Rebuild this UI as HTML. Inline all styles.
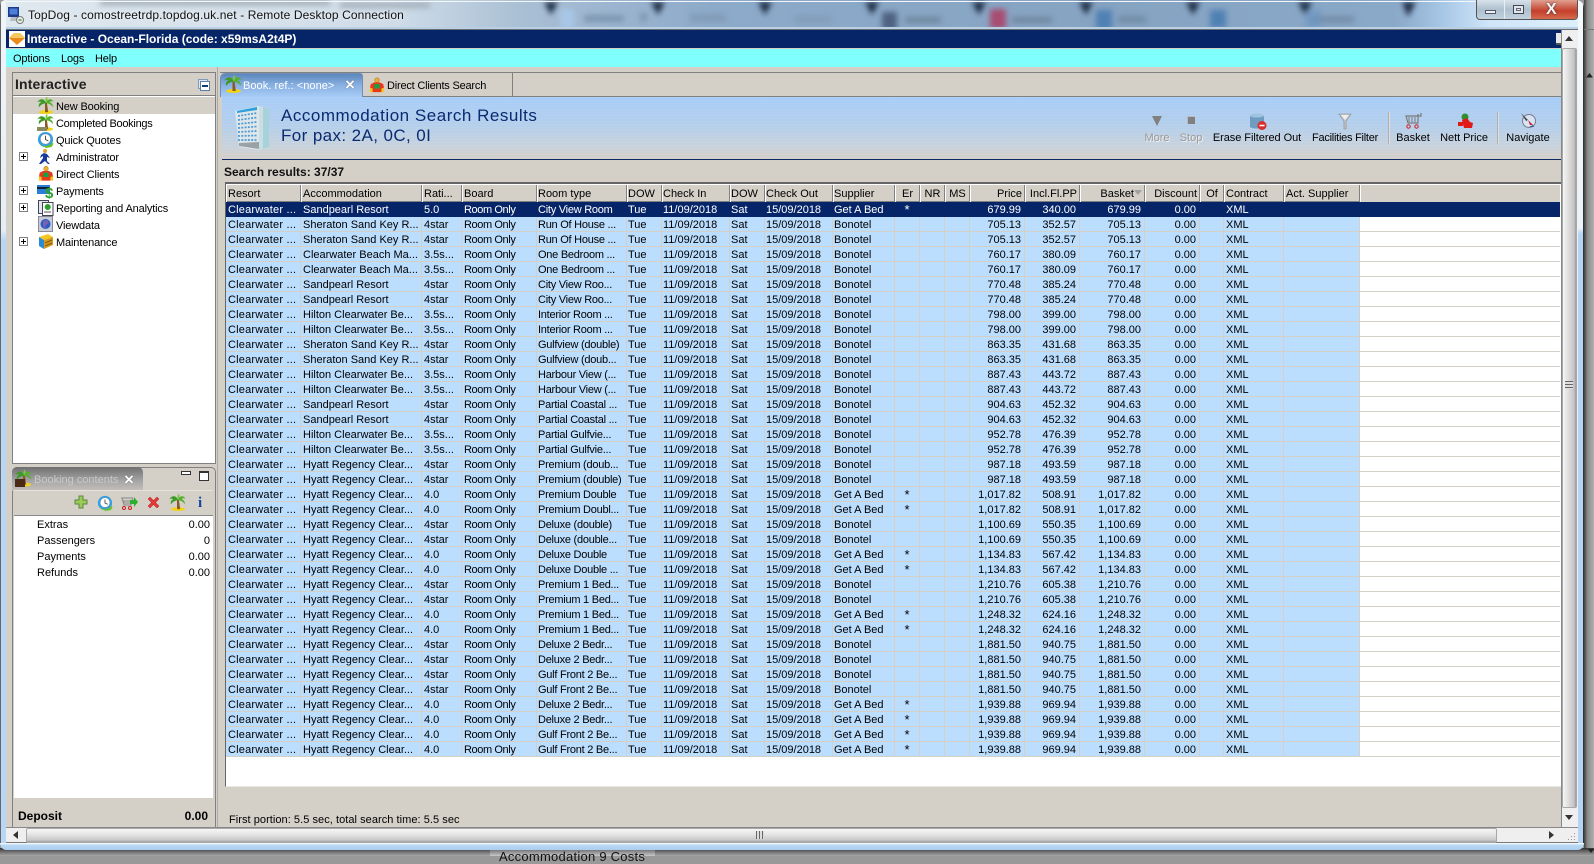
<!DOCTYPE html>
<html><head><meta charset="utf-8"><title>TopDog</title>
<style>
*{box-sizing:border-box}
html,body{margin:0;padding:0;width:1594px;height:856px;overflow:hidden;background:#999;font:11px "Liberation Sans",sans-serif;color:#000}
.a{position:absolute}
.t{position:absolute;white-space:nowrap;line-height:14px}
.n{letter-spacing:-.15px}
#win{position:absolute;left:0;top:0;width:1584px;height:850px;overflow:hidden;border-radius:6px 8px 7px 7px;background:#d4d0c8}
table{border-collapse:separate;border-spacing:0;table-layout:fixed;position:absolute;left:226px;top:184px;width:1334px}
th{height:18px;font-weight:normal;text-align:left;vertical-align:top;padding:3px 0 0 2px;background:#d4d0c8;box-shadow:inset 1px 1px 0 #fff,inset -1px -1px 0 #808080;overflow:hidden;white-space:nowrap;line-height:14px}
td{height:15px;padding:2px 0 0 2px;vertical-align:top;background:#bbdeff;border-right:1px solid #d4d0c8;border-bottom:1px solid #d4d0c8;overflow:hidden;white-space:nowrap;line-height:12px}
td:nth-child(21){background:#fff;border-right:0}
tr.s td{background:#062569;color:#fff;border-color:#062569}
td:nth-child(1){letter-spacing:.2px}
td:nth-child(4){letter-spacing:-.4px}
td:nth-child(5){letter-spacing:-.25px}
td:nth-child(5),td:nth-child(6),td:nth-child(7),td:nth-child(8),td:nth-child(9),td:nth-child(10),th:nth-child(5),th:nth-child(6),th:nth-child(7),th:nth-child(8),th:nth-child(9),th:nth-child(10){padding-left:1px}
td:nth-child(14),td:nth-child(15),td:nth-child(16),td:nth-child(17){text-align:right;padding:2px 3px 0 0}
th:nth-child(14),th:nth-child(15),th:nth-child(16),th:nth-child(17){text-align:right;padding:3px 3px 0 0}
td:nth-child(11){text-align:center;padding:2px 0 0;font-size:13px}
th:nth-child(11),th:nth-child(12),th:nth-child(13),th:nth-child(18){text-align:center;padding:3px 0 0}
svg{position:absolute;display:block}
.bt{position:absolute;top:131px;transform:translateX(-50%);white-space:nowrap;line-height:14px}
.dis{color:#9a9a9a;text-shadow:1px 1px 0 #eee}
</style></head><body>
<svg width="0" height="0" style="position:absolute"><defs>
<symbol id="palm" viewBox="0 0 18 18"><ellipse cx="9.500" cy="16" rx="7.500" ry="2" fill="#f2d21a"/><path d="M8.500 6l2 .2 1.300 9.800H8.500z" fill="#8a5a20"/><path d="M9.500 6.500C8 1.500 3 1 .5 5.500c2-.8 3-.8 4 0C2.500 6 1.500 8 2 11c2-3 4.500-4 7.500-4.500z" fill="#3c9a28"/><path d="M9.500 6.500C11 1.500 15.500 1 17.500 5c-2-.8-3.200-.5-4 .5 2 .5 3.500 2.500 3.500 5.500-2-3-4.500-4-7.500-4.500z" fill="#55b030"/><path d="M9.500 6.500C8.500 3 9 1 10.500 0c1 1.500 1 4-1 6.500z" fill="#7cc63c"/></symbol>
<symbol id="guy" viewBox="0 0 18 18"><circle cx="9" cy="3.500" r="2.500" fill="#f2b030" stroke="#a06a10" stroke-width=".6"/><path d="M2 8l4-2h6l4 2 1 5-3 1v3H4v-3l-3-1z" fill="#e8381a"/><path d="M6 8h6v5H6z" fill="#18a048"/><path d="M1 12l3 1v4H1zM17 12l-3 1v4h3z" fill="#f2c820"/></symbol>
<symbol id="clock" viewBox="0 0 18 18"><circle cx="9" cy="9" r="8" fill="#2fa0ea"/><path d="M3 13a8 8 0 0 0 13-1l1.500 1.500-2 3.500-6 1-5-3z" fill="#6cc02c"/><circle cx="9" cy="8.500" r="5.500" fill="#fff" stroke="#7a8a9a" stroke-width=".6"/><path d="M9 5v4l3 1.500" fill="none" stroke="#444" stroke-width="1"/></symbol>
</defs></svg>

<!-- desktop behind -->
<div class="a" style="left:1584px;top:0;width:10px;height:856px;background:linear-gradient(90deg,#3f3f3f,#8a8a8a 35%,#b0b0b0)"></div>
<div class="a" style="left:1584px;top:29px;width:10px;height:1px;background:#777"></div>
<svg style="left:1586px;top:72px" width="8" height="6"><path d="M0 5.500L3.500 1 7 5.500z" fill="#222"/></svg>
<div class="a" style="left:0;top:848px;width:1594px;height:8px;background:linear-gradient(#2f2f2f,#6d6d6d 45%,#a6a6a6)"></div>
<div class="a" style="left:490px;top:850px;width:165px;height:6px;background:linear-gradient(#777,#c8c8c8)"></div>
<div class="t" style="left:499px;top:850px;font-size:13px;letter-spacing:.25px;color:#111">Accommodation 9 Costs</div>
<svg style="left:1588px;top:849px" width="6" height="5"><path d="M0 0h6L3 4z" fill="#222"/></svg>

<div id="win">
<!-- glass -->
<div class="a" style="left:0;top:0;width:1584px;height:30px;background:linear-gradient(90deg,#dfe8ef 0,#cfdce8 25%,#a9bfd4 33%,#8daaca 45%,#86a3c2 70%,#8aa8c8 88%,#a6c6e6 91%,#cfe5f8 94%,#dff0fc 100%);overflow:hidden">
 <div class="a" style="left:0;top:0;width:1584px;height:30px;filter:blur(3px)">
  <div class="a" style="left:100px;top:0;width:230px;height:5px;background:#9aa6b0"></div>
  <div class="a" style="left:340px;top:2px;width:90px;height:6px;background:#a4b0bc"></div>
  <svg style="left:544px;top:2px" width="760" height="14" viewBox="0 0 760 14"><path d="M0 0h14L7 13zM107 0h14l-7 13zM214 0h14l-7 13zM321 0h14l-7 13zM428 0h14l-7 13zM535 0h14l-7 13zM642 0h14l-7 13z" fill="#1a2a40"/></svg>
  <svg style="left:1298px;top:2px" width="130" height="16" viewBox="0 0 130 16"><path d="M0 0h14L7 13zM104 0h14l-8 15z" fill="#1a2a40"/></svg>
  <div class="a" style="left:560px;top:9px;width:14px;height:20px;background:#a8c6e6"></div>
  <div class="a" style="left:584px;top:15px;width:40px;height:7px;background:#7d96b0"></div>
  <div class="a" style="left:640px;top:13px;width:7px;height:8px;background:#7d96b0"></div>
  <div class="a" style="left:690px;top:14px;width:36px;height:8px;background:#829cb8"></div>
  <div class="a" style="left:795px;top:16px;width:36px;height:7px;background:#829cb8"></div>
  <div class="a" style="left:882px;top:12px;width:15px;height:18px;background:#4e6180"></div>
  <div class="a" style="left:905px;top:17px;width:36px;height:6px;background:#6e869e"></div>
  <div class="a" style="left:990px;top:9px;width:16px;height:20px;background:#a84c70"></div>
  <div class="a" style="left:1012px;top:17px;width:40px;height:6px;background:#70869e"></div>
  <div class="a" style="left:1096px;top:10px;width:16px;height:20px;background:#4f80b4"></div>
  <div class="a" style="left:1118px;top:16px;width:28px;height:7px;background:#728ca6"></div>
  <div class="a" style="left:1310px;top:16px;width:44px;height:7px;background:#748ea8"></div>
  <div class="a" style="left:1305px;top:9px;width:16px;height:20px;background:#6b96c4;opacity:.6"></div>
  <div class="a" style="left:1210px;top:10px;width:16px;height:18px;background:#4f80b4"></div>
 </div>
</div>
<div class="a" style="left:0;top:1px;width:1584px;height:1px;background:#f4f6f8"></div>
<div class="a" style="left:0;top:27px;width:1584px;height:2px;background:#b9cfe4"></div>
<div class="a" style="left:5px;top:29px;width:1573px;height:1px;background:#6a6f74"></div>
<!-- side glass -->
<div class="a" style="left:0;top:0;width:6px;height:850px;background:linear-gradient(#f0f5f9 0,#e6eef5 230px,#b9d6f4 240px,#b9d6f4 100%);border-left:1px solid #666"></div>
<div class="a" style="left:1578px;top:0;width:6px;height:850px;background:linear-gradient(#f4f8fb 0,#eaf3fa 228px,#b5d3f3 234px,#b5d3f3 100%);border-right:1px solid #333"></div>
<div class="a" style="left:0;top:843px;width:1584px;height:7px;background:linear-gradient(#fff 0,#bcd8f4 30%,#a9cdf1 100%)"></div>
<!-- RD title -->
<svg style="left:8px;top:7px" width="16" height="17" viewBox="0 0 16 17"><rect x="0" y="0" width="11" height="10" fill="#1c3a8a"/><rect x="1.500" y="1.500" width="8" height="6" fill="#4a7fd8"/><path d="M3 10h7l1 4H2z" fill="#b8bcc4"/><circle cx="12" cy="13" r="3.500" fill="#eee" stroke="#777"/><path d="M10.500 13h3" stroke="#2a8a2a" stroke-width="1.300"/></svg>
<div class="t" style="left:28px;top:8px;font-size:12px;letter-spacing:.11px;color:#111;text-shadow:0 0 4px #fff">TopDog - comostreetrdp.topdog.uk.net - Remote Desktop Connection</div>
<!-- window buttons -->
<div class="a" style="left:1476px;top:0;width:102px;height:20px;border:1px solid #555;border-top:0;border-radius:0 0 4px 4px;background:linear-gradient(#d8e2ea,#aebfce 50%,#c4d2de);overflow:hidden">
 <div class="a" style="left:27px;top:0;width:1px;height:20px;background:#e8eef4"></div>
 <div class="a" style="left:54px;top:0;width:47px;height:20px;background:linear-gradient(#e0a090,#c4402c 55%,#d87050)"></div>
 <div class="a" style="left:8px;top:10px;width:11px;height:4px;background:#eef2f6;border:1px solid #556"></div>
 <div class="a" style="left:36px;top:5px;width:11px;height:9px;border:1px solid #445;background:#dfe6ec;box-shadow:inset 0 0 0 2px #dfe6ec,inset 0 0 0 3px #667"></div>
 <div class="t" style="left:69px;top:2px;font:bold 16px/15px 'Liberation Sans',sans-serif;color:#f4f4f4;text-shadow:0 0 2px #333">X</div>
</div>
<!-- navy title -->
<div class="a" style="left:6px;top:30px;width:1555px;height:18px;background:#062569"></div>
<div class="a" style="left:9px;top:31px;width:16px;height:16px;background:#fff"></div>
<svg style="left:9px;top:32px" width="16" height="14" viewBox="0 0 16 14"><path d="M0 6l5-5h6l5 5-8 7z" fill="#e88a1c"/><path d="M0 6l5-5h6l5 5z" fill="#f6c860"/></svg>
<div class="t" style="left:27px;top:32px;font-weight:bold;font-size:12px;color:#fff">Interactive - Ocean-Florida (code: x59msA2t4P)</div>
<div class="a" style="left:1556px;top:33px;width:5px;height:12px;background:#e8e8e8;border-bottom:2px solid #555"></div>
<!-- menu -->
<div class="a" style="left:6px;top:49px;width:1555px;height:18px;background:#80ffff"></div>
<div class="t n" style="left:13px;top:52px">Options</div>
<div class="t n" style="left:61px;top:52px">Logs</div>
<div class="t n" style="left:95px;top:52px">Help</div>
<!-- left panel -->
<div class="a" style="left:12px;top:72px;width:204px;height:392px;background:#fff;border:1px solid #808080"></div>
<div class="a" style="left:13px;top:73px;width:202px;height:23px;background:#d4d0c8;border-bottom:1px solid #808080"></div>
<div class="t" style="left:15px;top:76px;font-weight:bold;font-size:14px;line-height:16px;color:#222;letter-spacing:.15px">Interactive</div>
<div class="a" style="left:198px;top:79px;width:10px;height:10px;border:1px solid #7f9db9;background:#dde8f4"></div>
<div class="a" style="left:200px;top:81px;width:10px;height:10px;border:1px solid #5a7fa8;background:#fff"></div>
<div class="a" style="left:202px;top:85px;width:6px;height:2px;background:#123a78"></div>
<div class="a" style="left:13px;top:97px;width:202px;height:17px;background:#d4d0c8"></div>
<svg style="left:37px;top:97px" width="17" height="17"><use href="#palm"/></svg>
<svg style="left:37px;top:114px" width="17" height="17"><use href="#palm"/></svg>
<div class="a" style="left:37px;top:127px;width:10px;height:4px;background:#8a8a60"></div>
<svg style="left:37px;top:131px" width="17" height="17"><use href="#clock"/></svg>
<svg style="left:38px;top:148px" width="16" height="17" viewBox="0 0 16 17"><circle cx="7" cy="3" r="2" fill="#e0a030"/><path d="M6 5l3 1 3 4-3-1v4l3 3h-2l-3-3-4 3H1l4-6V8L2 10l1-3z" fill="#1a3a9a"/></svg>
<svg style="left:38px;top:165px" width="16" height="17"><use href="#guy"/></svg>
<svg style="left:37px;top:182px" width="17" height="17" viewBox="0 0 17 17"><rect x="0" y="3" width="13" height="9" fill="#2a7fd8"/><rect x="0" y="5" width="13" height="2" fill="#123"/><text x="8" y="16" font-family="Liberation Sans" font-weight="bold" font-size="15" fill="#2aa02a">$</text></svg>
<svg style="left:38px;top:199px" width="16" height="17" viewBox="0 0 16 17"><rect x=".5" y="1.500" width="10" height="13" fill="#dfe6ee" stroke="#445"/><rect x="4.500" y="3.500" width="10.500" height="13" fill="#fff" stroke="#445"/><circle cx="9.700" cy="8" r="3" fill="#28a028"/><path d="M6 13h7" stroke="#555"/></svg>
<svg style="left:38px;top:216px" width="15" height="17" viewBox="0 0 15 17"><rect x=".5" y=".5" width="14" height="15" fill="#c8ccd4" stroke="#889"/><circle cx="7.500" cy="8" r="5" fill="#2a5ac8"/><path d="M5 5l4-1 2 3-3 2-1 4-2-3z" fill="#7a60b0"/></svg>
<svg style="left:38px;top:233px" width="16" height="17" viewBox="0 0 16 17"><path d="M1 4l9-3 5 3-9 3z" fill="#f2c820"/><path d="M1 4l5 3v9L1 13z" fill="#2a8ad8"/><path d="M6 7l9-3v8l-9 4z" fill="#d89a18"/><path d="M7 10l7-3M7 13l7-3" stroke="#7a5a10"/></svg>
<div class="t n" style="left:56px;top:100px">New Booking</div>
<div class="t n" style="left:56px;top:117px;letter-spacing:-.28px">Completed Bookings</div>
<div class="t n" style="left:56px;top:134px">Quick Quotes</div>
<div class="t n" style="left:56px;top:151px">Administrator</div>
<div class="t n" style="left:56px;top:168px">Direct Clients</div>
<div class="t n" style="left:56px;top:185px">Payments</div>
<div class="t n" style="left:56px;top:202px">Reporting and Analytics</div>
<div class="t n" style="left:56px;top:219px">Viewdata</div>
<div class="t n" style="left:56px;top:236px">Maintenance</div>
<svg style="left:19px;top:0" width="9" height="250"><g fill="#fff" stroke="#808080"><rect x=".5" y="152.500" width="8" height="8"/><rect x=".5" y="186.500" width="8" height="8"/><rect x=".5" y="203.500" width="8" height="8"/><rect x=".5" y="237.500" width="8" height="8"/></g><path d="M2 156.500h5M4.500 154v5M2 190.500h5M4.500 188v5M2 207.500h5M4.500 205v5M2 241.500h5M4.500 239v5" stroke="#000"/></svg>
<!-- booking contents -->
<div class="a" style="left:12px;top:467px;width:204px;height:361px;border:1px solid #808080;border-bottom:0;border-radius:5px 5px 0 0;background:#d4d0c8"></div>
<div class="a" style="left:12px;top:467px;width:131px;height:24px;border-radius:5px 5px 0 0;background:linear-gradient(#6f6f6f,#a8a8a8 60%,#c4c0ba)"></div>
<svg style="left:15px;top:469px" width="17" height="18"><use href="#palm"/></svg>
<div class="a" style="left:15px;top:479px;width:10px;height:8px;background:#4a2a14"></div>
<div class="t" style="left:34px;top:473px;color:#c8c8c8">Booking contents</div>
<div class="t" style="left:124px;top:472px;font:bold 17px/15px 'Liberation Sans',sans-serif;color:#fff;text-shadow:0 0 1px #333">×</div>
<div class="a" style="left:181px;top:471px;width:10px;height:4px;border:1px solid #333;background:#fff"></div>
<div class="a" style="left:199px;top:471px;width:10px;height:10px;border:1px solid #333;border-top-width:2px;background:#fff"></div>
<div class="a" style="left:14px;top:491px;width:199px;height:24px;background:#d4d0c8;box-shadow:0 -1px 0 #e6e3dd"></div>
<div class="a" style="left:14px;top:515px;width:199px;height:283px;background:#fff;border-top:1px solid #888"></div>
<svg style="left:74px;top:495px" width="14" height="14" viewBox="0 0 14 14"><path d="M5 1h4v4h4v4H9v4H5V9H1V5h4z" fill="#9ccb5a" stroke="#5a8a3a"/></svg>
<svg style="left:97px;top:495px" width="16" height="16"><use href="#clock"/></svg>
<svg style="left:121px;top:495px" width="17" height="16" viewBox="0 0 17 16"><path d="M0 3h12M1 3l2 7h7l2-7M3 5v4M5 5v4M7 5v4M9 5v4" stroke="#888" fill="none"/><circle cx="3" cy="13" r="1.500" fill="none" stroke="#c22"/><circle cx="9" cy="13" r="1.500" fill="none" stroke="#c22"/><path d="M9 5h4V2l4 5-4 5V9H9z" fill="#2cb02c"/></svg>
<svg style="left:147px;top:496px" width="13" height="13" viewBox="0 0 13 13"><path d="M1 3l2-2 3.500 3.500L10 1l2 2-3.500 3.500L12 10l-2 2-3.500-3.500L3 12l-2-2 3.500-3.500z" fill="#e23a3a" stroke="#b02020" stroke-width=".5"/></svg>
<svg style="left:169px;top:494px" width="17" height="17"><use href="#palm"/></svg>
<div class="t" style="left:198px;top:495px;font:bold 15px/16px 'Liberation Serif',serif;color:#16489a">i</div>
<div class="t" style="left:37px;top:518px">Extras</div><div class="t" style="left:150px;width:60px;text-align:right;top:518px">0.00</div>
<div class="t" style="left:37px;top:534px">Passengers</div><div class="t" style="left:150px;width:60px;text-align:right;top:534px">0</div>
<div class="t" style="left:37px;top:550px">Payments</div><div class="t" style="left:150px;width:60px;text-align:right;top:550px">0.00</div>
<div class="t" style="left:37px;top:566px">Refunds</div><div class="t" style="left:150px;width:60px;text-align:right;top:566px">0.00</div>
<div class="t" style="left:18px;top:809px;font-weight:bold;font-size:12px">Deposit</div><div class="t" style="left:150px;width:58px;text-align:right;top:809px;font-weight:bold;font-size:12px">0.00</div>
<div class="t" style="left:18px;top:825px;font-weight:bold;font-size:12px">Profit</div><div class="t" style="left:150px;width:58px;text-align:right;top:825px;font-weight:bold;font-size:12px">0.00</div>
<!-- right tabs -->
<div class="a" style="left:217px;top:67px;width:1px;height:761px;background:#aaa"></div>
<div class="a" style="left:220px;top:72px;width:1341px;height:25px;border-top:1px solid #808080;border-bottom:1px solid #808080;background:#d4d0c8"></div>
<div class="a" style="left:220px;top:73px;width:143px;height:24px;border-radius:5px 3px 0 0;background:linear-gradient(#5c86bc,#86aee0 45%,#a8ccf6);border:1px solid #6f8fb6;border-bottom:0"></div>
<svg style="left:224px;top:75px" width="18" height="18"><use href="#palm"/></svg>
<div class="t" style="left:243px;top:79px;color:#fff;letter-spacing:.05px">Book. ref.: &lt;none&gt;</div>
<div class="t" style="left:345px;top:76px;font:bold 17px/17px 'Liberation Sans',sans-serif;color:#fff;text-shadow:0 0 1px #333">×</div>
<div class="a" style="left:363px;top:73px;width:150px;height:23px;background:#d4d0c8;border-right:1px solid #808080"></div>
<svg style="left:369px;top:76px" width="16" height="18"><use href="#guy"/></svg>
<div class="t" style="left:387px;top:79px;letter-spacing:-.2px">Direct Clients Search</div>
<!-- blue banner -->
<div class="a" style="left:222px;top:97px;width:1339px;height:62px;background:repeating-linear-gradient(rgba(255,255,255,.05) 0 1px,rgba(0,0,0,0) 1px 3px),linear-gradient(#a8cdf8,#b4cfec 45%,#c8d2dc 80%,#d4d0c8)"></div>
<div class="a" style="left:222px;top:159px;width:1339px;height:1px;background:#0a2a6a"></div>
<svg style="left:234px;top:102px" width="37" height="48" viewBox="0 0 37 48"><path d="M1 9l24-5 10 3v38l-10 3-20-3z" fill="#dfe6ea"/><path d="M25 4l10 3v38l-10 3z" fill="#a8d2da"/><path d="M25 4l4 1v42l-4 1z" fill="#c8dee2"/><path d="M3 9l20-4v3L3 11z" fill="#2aa0dc"/><g stroke="#4a9ad8" stroke-width="1.700" stroke-dasharray="2 1.300" fill="none"><path d="M4 14l19-3M4 18l19-2.500M4 22l19-2M4 26l19-1.500M4 30l19-1M4 34l19-.5M4 38l19 0"/></g><path d="M5 41l20-1v7l-20-3z" fill="#9aa2a6"/></svg>
<div class="t" style="left:281px;top:107px;font-size:17px;line-height:18px;color:#0a2a70;letter-spacing:.52px">Accommodation Search Results</div>
<div class="t" style="left:281px;top:127px;font-size:17px;line-height:18px;color:#0a2a70;letter-spacing:.4px">For pax: 2A, 0C, 0I</div>
<!-- toolbar -->
<svg style="left:1151px;top:115px" width="12" height="12" viewBox="0 0 12 12"><path d="M1 1h10L6 11z" fill="#808080"/></svg>
<div class="a" style="left:1187px;top:116px;width:8px;height:8px;background:#808080;box-shadow:inset 1px 1px 0 #bbb"></div>
<svg style="left:1250px;top:113px" width="17" height="17" viewBox="0 0 17 17"><ellipse cx="7" cy="3" rx="7" ry="2.500" fill="#9ec4e0"/><path d="M0 3v11c2 2 11 2 14 0V3c-3 2-12 2-14 0z" fill="#6f9cc0"/><circle cx="12" cy="12.500" r="4.500" fill="#d83030"/><path d="M9.500 12.500h5" stroke="#fff" stroke-width="1.500"/></svg>
<svg style="left:1338px;top:113px" width="14" height="17" viewBox="0 0 14 17"><path d="M1 1h12L8 8v8H6V8z" fill="#c6c6c6" stroke="#888" stroke-width=".6"/><path d="M3 2h8L7 7z" fill="#eee"/></svg>
<div class="a" style="left:1388px;top:112px;width:2px;height:32px;background:linear-gradient(90deg,#999,#f4f4f4)"></div>
<svg style="left:1405px;top:113px" width="17" height="16" viewBox="0 0 17 16"><path d="M16 0v3H1l2 7h10V1" fill="none" stroke="#7a7a7a" stroke-width="1.200"/><path d="M4 4v5M7 4v5M10 4v5" stroke="#7a7a7a"/><circle cx="3.500" cy="13.500" r="1.700" fill="none" stroke="#d02020"/><circle cx="11.500" cy="13.500" r="1.700" fill="none" stroke="#d02020"/></svg>
<svg style="left:1457px;top:113px" width="16" height="16" viewBox="0 0 16 16"><circle cx="8" cy="4" r="3.500" fill="#2f8f2f"/><path d="M1 9h5v4H1zM5 7l5-2 3 4 3 1-1 5H7z" fill="#e01818"/></svg>
<div class="a" style="left:1497px;top:112px;width:2px;height:32px;background:linear-gradient(90deg,#999,#f4f4f4)"></div>
<svg style="left:1520px;top:112px" width="17" height="18" viewBox="0 0 17 18"><circle cx="9" cy="9" r="6.500" fill="#d8e4f4" stroke="#7a7a8a"/><path d="M13 13L8 8l2 5z" fill="#c82020"/><path d="M1 1l7 7-2 1z" fill="#444"/><path d="M9 15l4-2 1 2z" fill="#385a9a"/></svg>
<div class="bt dis" style="left:1157px">More</div>
<div class="bt dis" style="left:1191px">Stop</div>
<div class="bt" style="left:1257px;letter-spacing:-.05px">Erase Filtered Out</div>
<div class="bt" style="left:1345px;letter-spacing:-.25px">Facilities Filter</div>
<div class="bt" style="left:1413px">Basket</div>
<div class="bt" style="left:1464px;letter-spacing:-.05px">Nett Price</div>
<div class="bt" style="left:1528px">Navigate</div>
<!-- results -->
<div class="t" style="left:224px;top:165px;font-weight:bold;font-size:12px;color:#111">Search results: 37/37</div>
<div class="a" style="left:225px;top:182px;width:1336px;height:605px;background:#fff;border-top:2px solid #666;border-left:1px solid #666;border-bottom:1px solid #e8e8e8"></div>
<table>
<colgroup><col style="width:75px"><col style="width:121px"><col style="width:40px"><col style="width:75px"><col style="width:90px"><col style="width:35px"><col style="width:68px"><col style="width:35px"><col style="width:68px"><col style="width:62px"><col style="width:25px"><col style="width:25px"><col style="width:25px"><col style="width:55px"><col style="width:55px"><col style="width:65px"><col style="width:55px"><col style="width:24px"><col style="width:60px"><col style="width:76px"><col style="width:200px"></colgroup>
<thead><tr><th>Resort</th><th>Accommodation</th><th>Rati...</th><th>Board</th><th>Room type</th><th>DOW</th><th>Check In</th><th>DOW</th><th>Check Out</th><th>Supplier</th><th>Er</th><th>NR</th><th>MS</th><th>Price</th><th>Incl.Fl.PP</th><th style="padding-right:11px">Basket</th><th>Discount</th><th>Of</th><th>Contract</th><th>Act. Supplier</th><th style="box-shadow:inset 1px 1px 0 #fff"></th></tr></thead>
<tbody>
<tr class="s"><td>Clearwater ...</td><td>Sandpearl Resort</td><td>5.0</td><td>Room Only</td><td>City View Room</td><td>Tue</td><td>11/09/2018</td><td>Sat</td><td>15/09/2018</td><td>Get A Bed</td><td>*</td><td></td><td></td><td>679.99</td><td>340.00</td><td>679.99</td><td>0.00</td><td></td><td>XML</td><td></td><td style="background:#062569"></td></tr>
<tr><td>Clearwater ...</td><td>Sheraton Sand Key R...</td><td>4star</td><td>Room Only</td><td>Run Of House ...</td><td>Tue</td><td>11/09/2018</td><td>Sat</td><td>15/09/2018</td><td>Bonotel</td><td></td><td></td><td></td><td>705.13</td><td>352.57</td><td>705.13</td><td>0.00</td><td></td><td>XML</td><td></td><td></td></tr>
<tr><td>Clearwater ...</td><td>Sheraton Sand Key R...</td><td>4star</td><td>Room Only</td><td>Run Of House ...</td><td>Tue</td><td>11/09/2018</td><td>Sat</td><td>15/09/2018</td><td>Bonotel</td><td></td><td></td><td></td><td>705.13</td><td>352.57</td><td>705.13</td><td>0.00</td><td></td><td>XML</td><td></td><td></td></tr>
<tr><td>Clearwater ...</td><td>Clearwater Beach Ma...</td><td>3.5s...</td><td>Room Only</td><td>One Bedroom ...</td><td>Tue</td><td>11/09/2018</td><td>Sat</td><td>15/09/2018</td><td>Bonotel</td><td></td><td></td><td></td><td>760.17</td><td>380.09</td><td>760.17</td><td>0.00</td><td></td><td>XML</td><td></td><td></td></tr>
<tr><td>Clearwater ...</td><td>Clearwater Beach Ma...</td><td>3.5s...</td><td>Room Only</td><td>One Bedroom ...</td><td>Tue</td><td>11/09/2018</td><td>Sat</td><td>15/09/2018</td><td>Bonotel</td><td></td><td></td><td></td><td>760.17</td><td>380.09</td><td>760.17</td><td>0.00</td><td></td><td>XML</td><td></td><td></td></tr>
<tr><td>Clearwater ...</td><td>Sandpearl Resort</td><td>4star</td><td>Room Only</td><td>City View Roo...</td><td>Tue</td><td>11/09/2018</td><td>Sat</td><td>15/09/2018</td><td>Bonotel</td><td></td><td></td><td></td><td>770.48</td><td>385.24</td><td>770.48</td><td>0.00</td><td></td><td>XML</td><td></td><td></td></tr>
<tr><td>Clearwater ...</td><td>Sandpearl Resort</td><td>4star</td><td>Room Only</td><td>City View Roo...</td><td>Tue</td><td>11/09/2018</td><td>Sat</td><td>15/09/2018</td><td>Bonotel</td><td></td><td></td><td></td><td>770.48</td><td>385.24</td><td>770.48</td><td>0.00</td><td></td><td>XML</td><td></td><td></td></tr>
<tr><td>Clearwater ...</td><td>Hilton Clearwater Be...</td><td>3.5s...</td><td>Room Only</td><td>Interior Room ...</td><td>Tue</td><td>11/09/2018</td><td>Sat</td><td>15/09/2018</td><td>Bonotel</td><td></td><td></td><td></td><td>798.00</td><td>399.00</td><td>798.00</td><td>0.00</td><td></td><td>XML</td><td></td><td></td></tr>
<tr><td>Clearwater ...</td><td>Hilton Clearwater Be...</td><td>3.5s...</td><td>Room Only</td><td>Interior Room ...</td><td>Tue</td><td>11/09/2018</td><td>Sat</td><td>15/09/2018</td><td>Bonotel</td><td></td><td></td><td></td><td>798.00</td><td>399.00</td><td>798.00</td><td>0.00</td><td></td><td>XML</td><td></td><td></td></tr>
<tr><td>Clearwater ...</td><td>Sheraton Sand Key R...</td><td>4star</td><td>Room Only</td><td>Gulfview (double)</td><td>Tue</td><td>11/09/2018</td><td>Sat</td><td>15/09/2018</td><td>Bonotel</td><td></td><td></td><td></td><td>863.35</td><td>431.68</td><td>863.35</td><td>0.00</td><td></td><td>XML</td><td></td><td></td></tr>
<tr><td>Clearwater ...</td><td>Sheraton Sand Key R...</td><td>4star</td><td>Room Only</td><td>Gulfview (doub...</td><td>Tue</td><td>11/09/2018</td><td>Sat</td><td>15/09/2018</td><td>Bonotel</td><td></td><td></td><td></td><td>863.35</td><td>431.68</td><td>863.35</td><td>0.00</td><td></td><td>XML</td><td></td><td></td></tr>
<tr><td>Clearwater ...</td><td>Hilton Clearwater Be...</td><td>3.5s...</td><td>Room Only</td><td>Harbour View (...</td><td>Tue</td><td>11/09/2018</td><td>Sat</td><td>15/09/2018</td><td>Bonotel</td><td></td><td></td><td></td><td>887.43</td><td>443.72</td><td>887.43</td><td>0.00</td><td></td><td>XML</td><td></td><td></td></tr>
<tr><td>Clearwater ...</td><td>Hilton Clearwater Be...</td><td>3.5s...</td><td>Room Only</td><td>Harbour View (...</td><td>Tue</td><td>11/09/2018</td><td>Sat</td><td>15/09/2018</td><td>Bonotel</td><td></td><td></td><td></td><td>887.43</td><td>443.72</td><td>887.43</td><td>0.00</td><td></td><td>XML</td><td></td><td></td></tr>
<tr><td>Clearwater ...</td><td>Sandpearl Resort</td><td>4star</td><td>Room Only</td><td>Partial Coastal ...</td><td>Tue</td><td>11/09/2018</td><td>Sat</td><td>15/09/2018</td><td>Bonotel</td><td></td><td></td><td></td><td>904.63</td><td>452.32</td><td>904.63</td><td>0.00</td><td></td><td>XML</td><td></td><td></td></tr>
<tr><td>Clearwater ...</td><td>Sandpearl Resort</td><td>4star</td><td>Room Only</td><td>Partial Coastal ...</td><td>Tue</td><td>11/09/2018</td><td>Sat</td><td>15/09/2018</td><td>Bonotel</td><td></td><td></td><td></td><td>904.63</td><td>452.32</td><td>904.63</td><td>0.00</td><td></td><td>XML</td><td></td><td></td></tr>
<tr><td>Clearwater ...</td><td>Hilton Clearwater Be...</td><td>3.5s...</td><td>Room Only</td><td>Partial Gulfvie...</td><td>Tue</td><td>11/09/2018</td><td>Sat</td><td>15/09/2018</td><td>Bonotel</td><td></td><td></td><td></td><td>952.78</td><td>476.39</td><td>952.78</td><td>0.00</td><td></td><td>XML</td><td></td><td></td></tr>
<tr><td>Clearwater ...</td><td>Hilton Clearwater Be...</td><td>3.5s...</td><td>Room Only</td><td>Partial Gulfvie...</td><td>Tue</td><td>11/09/2018</td><td>Sat</td><td>15/09/2018</td><td>Bonotel</td><td></td><td></td><td></td><td>952.78</td><td>476.39</td><td>952.78</td><td>0.00</td><td></td><td>XML</td><td></td><td></td></tr>
<tr><td>Clearwater ...</td><td>Hyatt Regency Clear...</td><td>4star</td><td>Room Only</td><td>Premium (doub...</td><td>Tue</td><td>11/09/2018</td><td>Sat</td><td>15/09/2018</td><td>Bonotel</td><td></td><td></td><td></td><td>987.18</td><td>493.59</td><td>987.18</td><td>0.00</td><td></td><td>XML</td><td></td><td></td></tr>
<tr><td>Clearwater ...</td><td>Hyatt Regency Clear...</td><td>4star</td><td>Room Only</td><td>Premium (double)</td><td>Tue</td><td>11/09/2018</td><td>Sat</td><td>15/09/2018</td><td>Bonotel</td><td></td><td></td><td></td><td>987.18</td><td>493.59</td><td>987.18</td><td>0.00</td><td></td><td>XML</td><td></td><td></td></tr>
<tr><td>Clearwater ...</td><td>Hyatt Regency Clear...</td><td>4.0</td><td>Room Only</td><td>Premium Double</td><td>Tue</td><td>11/09/2018</td><td>Sat</td><td>15/09/2018</td><td>Get A Bed</td><td>*</td><td></td><td></td><td>1,017.82</td><td>508.91</td><td>1,017.82</td><td>0.00</td><td></td><td>XML</td><td></td><td></td></tr>
<tr><td>Clearwater ...</td><td>Hyatt Regency Clear...</td><td>4.0</td><td>Room Only</td><td>Premium Doubl...</td><td>Tue</td><td>11/09/2018</td><td>Sat</td><td>15/09/2018</td><td>Get A Bed</td><td>*</td><td></td><td></td><td>1,017.82</td><td>508.91</td><td>1,017.82</td><td>0.00</td><td></td><td>XML</td><td></td><td></td></tr>
<tr><td>Clearwater ...</td><td>Hyatt Regency Clear...</td><td>4star</td><td>Room Only</td><td>Deluxe (double)</td><td>Tue</td><td>11/09/2018</td><td>Sat</td><td>15/09/2018</td><td>Bonotel</td><td></td><td></td><td></td><td>1,100.69</td><td>550.35</td><td>1,100.69</td><td>0.00</td><td></td><td>XML</td><td></td><td></td></tr>
<tr><td>Clearwater ...</td><td>Hyatt Regency Clear...</td><td>4star</td><td>Room Only</td><td>Deluxe (double...</td><td>Tue</td><td>11/09/2018</td><td>Sat</td><td>15/09/2018</td><td>Bonotel</td><td></td><td></td><td></td><td>1,100.69</td><td>550.35</td><td>1,100.69</td><td>0.00</td><td></td><td>XML</td><td></td><td></td></tr>
<tr><td>Clearwater ...</td><td>Hyatt Regency Clear...</td><td>4.0</td><td>Room Only</td><td>Deluxe Double</td><td>Tue</td><td>11/09/2018</td><td>Sat</td><td>15/09/2018</td><td>Get A Bed</td><td>*</td><td></td><td></td><td>1,134.83</td><td>567.42</td><td>1,134.83</td><td>0.00</td><td></td><td>XML</td><td></td><td></td></tr>
<tr><td>Clearwater ...</td><td>Hyatt Regency Clear...</td><td>4.0</td><td>Room Only</td><td>Deluxe Double ...</td><td>Tue</td><td>11/09/2018</td><td>Sat</td><td>15/09/2018</td><td>Get A Bed</td><td>*</td><td></td><td></td><td>1,134.83</td><td>567.42</td><td>1,134.83</td><td>0.00</td><td></td><td>XML</td><td></td><td></td></tr>
<tr><td>Clearwater ...</td><td>Hyatt Regency Clear...</td><td>4star</td><td>Room Only</td><td>Premium 1 Bed...</td><td>Tue</td><td>11/09/2018</td><td>Sat</td><td>15/09/2018</td><td>Bonotel</td><td></td><td></td><td></td><td>1,210.76</td><td>605.38</td><td>1,210.76</td><td>0.00</td><td></td><td>XML</td><td></td><td></td></tr>
<tr><td>Clearwater ...</td><td>Hyatt Regency Clear...</td><td>4star</td><td>Room Only</td><td>Premium 1 Bed...</td><td>Tue</td><td>11/09/2018</td><td>Sat</td><td>15/09/2018</td><td>Bonotel</td><td></td><td></td><td></td><td>1,210.76</td><td>605.38</td><td>1,210.76</td><td>0.00</td><td></td><td>XML</td><td></td><td></td></tr>
<tr><td>Clearwater ...</td><td>Hyatt Regency Clear...</td><td>4.0</td><td>Room Only</td><td>Premium 1 Bed...</td><td>Tue</td><td>11/09/2018</td><td>Sat</td><td>15/09/2018</td><td>Get A Bed</td><td>*</td><td></td><td></td><td>1,248.32</td><td>624.16</td><td>1,248.32</td><td>0.00</td><td></td><td>XML</td><td></td><td></td></tr>
<tr><td>Clearwater ...</td><td>Hyatt Regency Clear...</td><td>4.0</td><td>Room Only</td><td>Premium 1 Bed...</td><td>Tue</td><td>11/09/2018</td><td>Sat</td><td>15/09/2018</td><td>Get A Bed</td><td>*</td><td></td><td></td><td>1,248.32</td><td>624.16</td><td>1,248.32</td><td>0.00</td><td></td><td>XML</td><td></td><td></td></tr>
<tr><td>Clearwater ...</td><td>Hyatt Regency Clear...</td><td>4star</td><td>Room Only</td><td>Deluxe 2 Bedr...</td><td>Tue</td><td>11/09/2018</td><td>Sat</td><td>15/09/2018</td><td>Bonotel</td><td></td><td></td><td></td><td>1,881.50</td><td>940.75</td><td>1,881.50</td><td>0.00</td><td></td><td>XML</td><td></td><td></td></tr>
<tr><td>Clearwater ...</td><td>Hyatt Regency Clear...</td><td>4star</td><td>Room Only</td><td>Deluxe 2 Bedr...</td><td>Tue</td><td>11/09/2018</td><td>Sat</td><td>15/09/2018</td><td>Bonotel</td><td></td><td></td><td></td><td>1,881.50</td><td>940.75</td><td>1,881.50</td><td>0.00</td><td></td><td>XML</td><td></td><td></td></tr>
<tr><td>Clearwater ...</td><td>Hyatt Regency Clear...</td><td>4star</td><td>Room Only</td><td>Gulf Front 2 Be...</td><td>Tue</td><td>11/09/2018</td><td>Sat</td><td>15/09/2018</td><td>Bonotel</td><td></td><td></td><td></td><td>1,881.50</td><td>940.75</td><td>1,881.50</td><td>0.00</td><td></td><td>XML</td><td></td><td></td></tr>
<tr><td>Clearwater ...</td><td>Hyatt Regency Clear...</td><td>4star</td><td>Room Only</td><td>Gulf Front 2 Be...</td><td>Tue</td><td>11/09/2018</td><td>Sat</td><td>15/09/2018</td><td>Bonotel</td><td></td><td></td><td></td><td>1,881.50</td><td>940.75</td><td>1,881.50</td><td>0.00</td><td></td><td>XML</td><td></td><td></td></tr>
<tr><td>Clearwater ...</td><td>Hyatt Regency Clear...</td><td>4.0</td><td>Room Only</td><td>Deluxe 2 Bedr...</td><td>Tue</td><td>11/09/2018</td><td>Sat</td><td>15/09/2018</td><td>Get A Bed</td><td>*</td><td></td><td></td><td>1,939.88</td><td>969.94</td><td>1,939.88</td><td>0.00</td><td></td><td>XML</td><td></td><td></td></tr>
<tr><td>Clearwater ...</td><td>Hyatt Regency Clear...</td><td>4.0</td><td>Room Only</td><td>Deluxe 2 Bedr...</td><td>Tue</td><td>11/09/2018</td><td>Sat</td><td>15/09/2018</td><td>Get A Bed</td><td>*</td><td></td><td></td><td>1,939.88</td><td>969.94</td><td>1,939.88</td><td>0.00</td><td></td><td>XML</td><td></td><td></td></tr>
<tr><td>Clearwater ...</td><td>Hyatt Regency Clear...</td><td>4.0</td><td>Room Only</td><td>Gulf Front 2 Be...</td><td>Tue</td><td>11/09/2018</td><td>Sat</td><td>15/09/2018</td><td>Get A Bed</td><td>*</td><td></td><td></td><td>1,939.88</td><td>969.94</td><td>1,939.88</td><td>0.00</td><td></td><td>XML</td><td></td><td></td></tr>
<tr><td>Clearwater ...</td><td>Hyatt Regency Clear...</td><td>4.0</td><td>Room Only</td><td>Gulf Front 2 Be...</td><td>Tue</td><td>11/09/2018</td><td>Sat</td><td>15/09/2018</td><td>Get A Bed</td><td>*</td><td></td><td></td><td>1,939.88</td><td>969.94</td><td>1,939.88</td><td>0.00</td><td></td><td>XML</td><td></td><td></td></tr>
</tbody></table>
<svg style="left:1134px;top:190px" width="9" height="6"><path d="M0 0h8L4 5z" fill="#a0a0a0"/></svg>
<div class="t" style="left:229px;top:813px;letter-spacing:.05px">First portion: 5.5 sec, total search time: 5.5 sec</div>
<!-- vertical scrollbar -->
<div class="a" style="left:1561px;top:30px;width:17px;height:797px;background:#efefef;border-left:1px solid #888"></div>
<svg style="left:1565px;top:36px" width="9" height="6"><path d="M0 5L4 0l4 5z" fill="#333"/></svg>
<div class="a" style="left:1562px;top:48px;width:15px;height:760px;background:linear-gradient(90deg,#f6f6f6,#e4e4e4 30%,#c4c4c4 85%,#9a9a9a);border:1px solid #a8a8a8;border-radius:2px"></div>
<div class="a" style="left:1565px;top:381px;width:8px;height:8px;background:repeating-linear-gradient(#666 0 1px,#ddd 1px 3px)"></div>
<svg style="left:1565px;top:815px" width="9" height="6"><path d="M0 0l4 5 4-5z" fill="#333"/></svg>
<!-- horizontal scrollbar -->
<div class="a" style="left:6px;top:827px;width:1572px;height:16px;background:#efefef;border-top:1px solid #888;border-bottom:1px solid #777"></div>
<svg style="left:13px;top:831px" width="6" height="9"><path d="M5 0L0 4l5 4z" fill="#333"/></svg>
<div class="a" style="left:26px;top:828px;width:1471px;height:15px;background:linear-gradient(#f6f6f6,#e6e6e6 40%,#c8c8c8 85%,#a0a0a0);border:1px solid #a8a8a8;border-radius:2px"></div>
<div class="a" style="left:756px;top:831px;width:8px;height:8px;background:repeating-linear-gradient(90deg,#666 0 1px,#ddd 1px 3px)"></div>
<svg style="left:1549px;top:831px" width="6" height="9"><path d="M0 0l5 4-5 4z" fill="#333"/></svg>
<svg style="left:1566px;top:832px" width="10" height="10"><path d="M8 1h1v1H8zM5 4h1v1H5zM8 4h1v1H8zM2 7h1v1H2zM5 7h1v1H5zM8 7h1v1H8z" fill="#999"/></svg>
</div>
</body></html>
